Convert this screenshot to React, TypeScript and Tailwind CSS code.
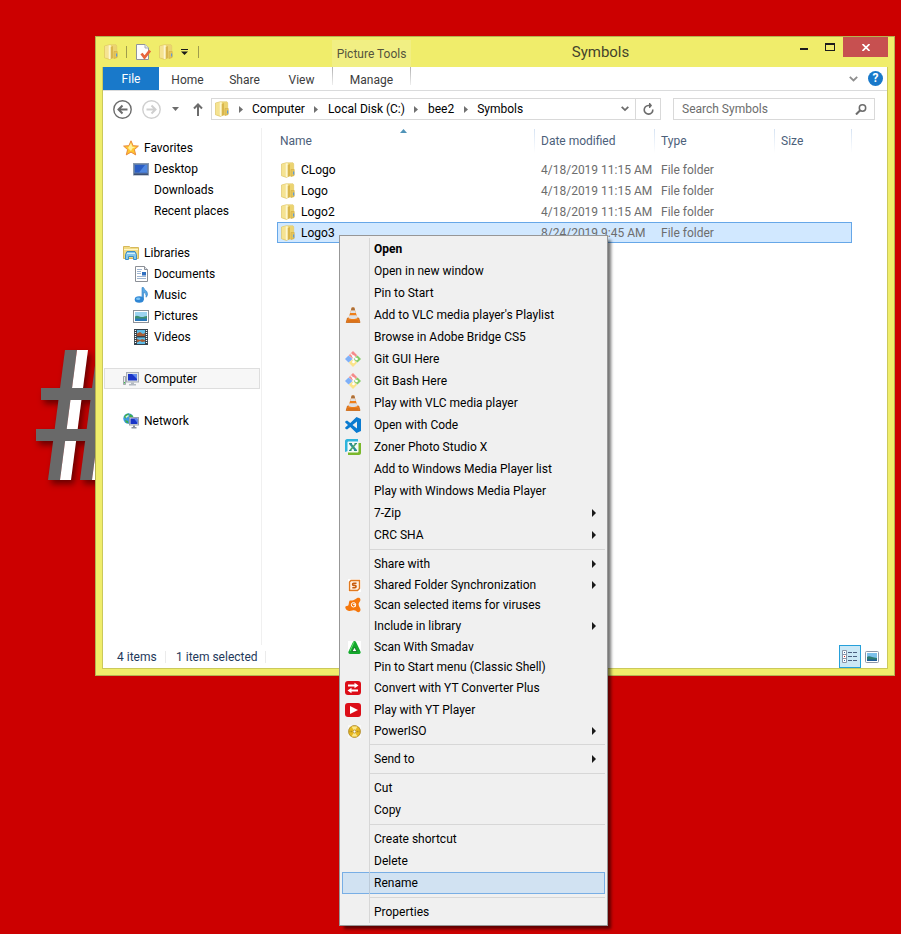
import type { ReactNode } from 'react';
import clsx from 'clsx';

function FolderIcon() {
  return (
    <svg width="14" height="16" viewBox="0 0 14 16" className="shrink-0">
      <path d="M.5 2 5 .8h7l.7 1V14H8l-2.500 1.500L.5 13.800z" fill="#efd978" stroke="#dcc263" strokeWidth=".6" />
      <path d="M1 2.300 4.500 1.300v12.900L1 13.400z" fill="#f5e391" />
      <path d="M4.600 1.200h2.200v13.500l-1.300.5-.9-.6z" fill="#fdf6cf" />
      <path d="M6.800 3 9 2v12l-2.200 1z" fill="#d9b64c" />
      <path d="M9 2.200h3.300V13.500H9z" fill="#ecd370" />
      <path d="M10 7.500h3.200v5.700L10 14.500z" fill="#e4c65c" stroke="#d3ad45" strokeWidth=".6" />
      <path d="M12 9.500h1.200v3H12z" fill="#5d9ad8" />
    </svg>
  );
}

function CheckedPageIcon() {
  return (
    <svg width="16" height="16" viewBox="0 0 16 16">
      <path d="M1.5.5h8.500l3.500 3.500v11.500h-12z" fill="#fdfdfd" stroke="#8f949c" />
      <path d="M10 .5v3.500h3.500" fill="#e6e9ee" stroke="#a8adb5" />
      <path d="m6.500 9.500 3 4L15 6.500" fill="none" stroke="#e8643c" strokeWidth="2.800" />
    </svg>
  );
}

function StarIcon() {
  return (
    <svg width="16" height="16" viewBox="0 0 16 16">
      <path d="m8 .8 2.1 4.900 5.300.4-4 3.500 1.300 5.300L8 12.100l-4.700 2.800 1.300-5.300-4-3.500 5.300-.4z" fill="#ffc72e" stroke="#ea8a3c" />
      <path d="m8 3 1.300 3.700 3.500.4-3.500 1.500L8 11 5 8z" fill="#fff0a0" />
    </svg>
  );
}

function DesktopIcon() {
  return (
    <svg width="16" height="16" viewBox="0 0 16 16">
      <rect x=".5" y="2.500" width="15" height="11.500" fill="#5f7fae" stroke="#8797ad" />
      <rect x="2" y="4" width="12" height="7.500" fill="#2b5dc4" />
      <path d="M6 11.500 12 4h2v7.500z" fill="#4e86e0" />
      <path d="M1 12.500h14V14H1z" fill="#3d4f73" />
    </svg>
  );
}

function LibrariesIcon() {
  return (
    <svg width="16" height="16" viewBox="0 0 16 16">
      <path d="M.5 1.500h6l1 1h8v11H.5z" fill="#f2dc84" stroke="#d6b85a" />
      <path d="M1 4.500h14" stroke="#fff6c8" />
      <path d="M2.500 14.500V9.500l1.500-3h8l1.500 3v5h-3v-3h-5v3z" fill="#83c6ea" stroke="#3e8cc2" />
      <path d="M4 8.500h8" stroke="#d4f0fc" />
    </svg>
  );
}

function DocumentsIcon() {
  return (
    <svg width="16" height="16" viewBox="0 0 16 16">
      <path d="M2.500.5h9l3 3v12h-12z" fill="#fff" stroke="#8b8f96" />
      <path d="M11.500.5v3h3" fill="#dfe6ee" stroke="#8b8f96" />
      <path d="M4 3.500h5M4 5.500h4M4 7.500h4M4 10.500h9M4 12.500h9" stroke="#9fb6d2" />
      <rect x="9" y="6" width="4" height="3.500" fill="#2f6fc0" />
    </svg>
  );
}

function MusicIcon() {
  return (
    <svg width="16" height="16" viewBox="0 0 16 16">
      <path d="M9 12.500V.5h1.500c.5 2.500 4 3 4 6.500 0 1.500-.7 2.800-1.500 3.300.5-3.300-1-4.300-2.500-4.800v7z" fill="#5aa8e4" stroke="#2f7dc4" strokeWidth=".6" />
      <ellipse cx="6.200" cy="12.500" rx="4.500" ry="3.300" fill="#2f86d4" />
      <ellipse cx="5.200" cy="11.700" rx="2.200" ry="1.300" fill="#7cc4f4" />
    </svg>
  );
}

function PicturesIcon() {
  return (
    <svg width="16" height="16" viewBox="0 0 16 16">
      <rect x=".5" y="2.500" width="15" height="12" fill="#fff" stroke="#8d9299" />
      <rect x="2" y="4" width="12" height="9" fill="#9cd4f0" />
      <path d="M2 8.500c2-2 4 0 6 .5s4-1 6-1V11H2z" fill="#3c8f70" />
      <path d="M2 10.500h12V13H2z" fill="#2a78b8" />
    </svg>
  );
}

function VideosIcon() {
  return (
    <svg width="16" height="16" viewBox="0 0 16 16">
      <rect x="1" width="14" height="16" fill="#35424c" />
      <rect x="4" y="1" width="8" height="6" fill="#5fbde8" />
      <rect x="4" y="8.500" width="8" height="6.500" fill="#5fbde8" />
      <path d="M4 4.500 7 3l3 2 2-1v3H4zM4 10l3 1 2-1 3 1v1.500L9 13l-2-1-3 1.500z" fill="#a85c34" />
      <path d="M2.500 1v14M13.500 1v14" stroke="#fff" strokeWidth="1.300" strokeDasharray="1 1" />
    </svg>
  );
}

function ComputerIcon() {
  return (
    <svg width="16" height="16" viewBox="0 0 16 16">
      <path d="M.5 5.500h2v8h-2z" fill="#e8eaec" stroke="#8f959c" strokeWidth=".8" />
      <path d="M1 11h1v1.500H1z" fill="#3fc14c" />
      <rect x="3.500" y="1.500" width="12" height="9.500" fill="#dfe3e8" stroke="#a7adb5" />
      <rect x="5" y="3" width="9" height="6.500" fill="#1a35c8" />
      <path d="M9 3h5v5z" fill="#5c86ec" />
      <path d="M8 11.500h3v1.500h2v1.500H6V13h2z" fill="#b4bac2" />
    </svg>
  );
}

function NetworkIcon() {
  return (
    <svg width="16" height="16" viewBox="0 0 16 16">
      <circle cx="5.500" cy="5.500" r="5.200" fill="#3d9ae0" />
      <path d="M1 4c1-2.500 3-3.500 5-3.500L5 3 2.500 5.500zM7 1l3 2-1 3-3-1zM2 7l3 1 .5 2.500L3 9.500z" fill="#3fae48" />
      <path d="M2.500 3.500 5 2l1 1-3 2z" fill="#d8f4dc" />
      <rect x="6.500" y="4.500" width="9" height="7.500" fill="#dfe3e8" stroke="#9aa1aa" />
      <rect x="7.500" y="5.500" width="7" height="5.500" fill="#1a35c8" />
      <path d="M11 5.500h3.500V10z" fill="#5c86ec" />
      <path d="M10 12.500h2V14h1.500v1.500h-5V14H10z" fill="#8a919c" />
    </svg>
  );
}

function VlcIcon() {
  return (
    <svg width="16" height="16" viewBox="0 0 16 16">
      <path d="M2.500 11h11.200l1.300 4.500H1.200z" fill="#f08020" stroke="#c86410" strokeWidth=".8" />
      <path d="M6.800.5h2.400L12.800 12c-2.300 1.500-7.300 1.500-9.600 0z" fill="#ee7f1a" />
      <path d="M6 3.200h4l.9 2.800H5.100zM4.400 8.300h7.200l.9 2.700c-2.400 1.400-6.600 1.400-9 0z" fill="#dfe1e4" />
      <path d="M6.800.5h2.400l.8 2.700H6z" fill="#a8703c" />
      <path d="M2.500 14h11" stroke="#c86410" />
    </svg>
  );
}

function GitIcon() {
  return (
    <svg width="16" height="16" viewBox="0 0 16 16">
      <path d="M8 0 12.200 4.200 8.800 7.200H7.200L3.800 4.200z" fill="#f58a8a" />
      <path d="m3.500 4.500 3.400 2.700v1.600L3.500 11.500 0 8z" fill="#7fb0f8" />
      <path d="M12.500 4.500 16 8l-3.500 3.500-3.400-2.700V7.200z" fill="#86cc66" />
      <path d="m3.800 11.800 3.400-3h1.600l3.400 3L8 16z" fill="#fbe38a" />
      <path d="m5.500 2.500 3 3v6M8.500 5.500l3.500 3" stroke="#f4f4f4" strokeWidth="1.300" fill="none" />
      <circle cx="8.500" cy="5.500" r="1.300" fill="#fff" />
      <circle cx="8.500" cy="11" r="1.300" fill="#fff" />
      <circle cx="11.500" cy="8" r="1.300" fill="#fff" />
    </svg>
  );
}

function CodeIcon() {
  return (
    <svg width="16" height="16" viewBox="0 0 16 16">
      <path d="M11.500 0 16 2v12l-4.500 2L5.300 10 2 12.500.2 11.500v-1L3 8 .2 5.500v-1L2 3.500 5.300 6zM12 4.500 7.500 8l4.500 3.500z" fill="#0b7bd0" fillRule="evenodd" />
    </svg>
  );
}

function ZonerIcon() {
  return (
    <svg width="16" height="16" viewBox="0 0 16 16">
      <path d="M0 2C0 1 1 0 2 0h11v3H3v9L0 13z" fill="#2fb4dc" />
      <path d="M13 4h3v10c0 1-1 2-2 2H3v-3h10z" fill="#7ab82c" />
      <rect x="2.500" y="2.500" width="11" height="11" rx="1" fill="#f6fafa" />
      <path d="m5 4.500 6 7" stroke="#2c8f98" strokeWidth="2.200" />
      <path d="m11 4.500-6 7" stroke="#48a468" strokeWidth="1.600" />
      <path d="M4 4.500h3M9.500 4.500h2.500M4 11.500h2.500M9 11.500h3" stroke="#2c8f80" />
    </svg>
  );
}

function SyncIcon() {
  return (
    <svg width="13" height="13" viewBox="0 0 13 13">
      <path d="M0 0h13v13H0z" fill="#fff" />
      <path d="M3 1.500h8.500v8l-2 2h-8V3z" fill="#fff3e4" stroke="#e07a20" strokeWidth="1.400" />
      <path d="M8.500 4.300H5.700c-1.500 0-1.500 2.100 0 2.100h1.200c1.500 0 1.500 2.300 0 2.300H4.300" fill="none" stroke="#c85c0c" strokeWidth="1.600" />
    </svg>
  );
}

function AvastIcon() {
  return (
    <svg width="16" height="16" viewBox="0 0 16 16">
      <path d="M5 3.500c2 .3 3.500 0 5.300-1.200C11.500 1 13 .3 14.200.8c1.500.7 1.600 2.700.5 4-.8 1-1.200 2-1 3.200.2 1.500 1.800 3 1.800 4.800 0 2.200-2.300 3-3.800 1.700-1.300-1.200-2.700-1.500-4.400-1-1.500.4-2.500.8-4 .3-1.800-.5-2.800-2-3-3.300s1-1.500 2.500-1.700C4.200 8.500 3.500 4 5 3.500z" fill="#f5770c" />
      <circle cx="8.500" cy="7.800" r="2.200" fill="none" stroke="#fff" strokeWidth="1" />
      <path d="M8 7.300h2.200v2.500" fill="none" stroke="#fff" />
    </svg>
  );
}

function SmadavIcon() {
  return (
    <svg width="13" height="13" viewBox="0 0 13 13">
      <path d="M0 0h13v13H0z" fill="#fff" />
      <path d="M6.500 0c1 0 1.500.8 2 2l4 8.500c.5 1.500 0 2.500-1.500 2.500H2C.5 13 0 12 .5 10.500l4-8.500c.5-1.200 1-2 2-2z" fill="#14a82c" />
      <path d="M6.500 6 9 10.500H4z" fill="#fff" stroke="#0a6c1a" strokeWidth=".8" />
      <path d="m6 1-4 9" stroke="#5fe070" fill="none" />
    </svg>
  );
}

function ConverterIcon() {
  return (
    <svg width="16" height="16" viewBox="0 0 16 16">
      <rect y="1" width="16" height="14" rx="3" fill="#dc0e18" />
      <path d="M3 5.500h7M13 10.500H6" stroke="#fff" strokeWidth="1.800" />
      <path d="M9.500 2.700 13.500 5.500l-4 2.800zM6.500 7.700v5.600l-4-2.800z" fill="#fff" />
    </svg>
  );
}

function PlayerIcon() {
  return (
    <svg width="16" height="16" viewBox="0 0 16 16">
      <rect y="1" width="16" height="14" rx="3" fill="#dc0e18" />
      <path d="M5 4v8l8-4z" fill="#fff" />
    </svg>
  );
}

function DiscIcon() {
  return (
    <svg width="13" height="13" viewBox="0 0 13 13">
      <path d="M0 0h13v13H0z" fill="#f8f8f8" />
      <circle cx="6.500" cy="6.500" r="6" fill="#e8b820" stroke="#a88428" strokeWidth=".8" />
      <path d="m6.500 6.500-3-5h6zM6.500 6.500l-3 5h6z" fill="#fae88c" />
      <circle cx="6.500" cy="6.500" r="1.500" fill="#fff" stroke="#a88428" strokeWidth=".8" />
      <path d="M1.500 6.500h2.500M9 6.500h2.500" stroke="#b08a20" strokeWidth="1.500" strokeDasharray="1 .5" />
    </svg>
  );
}

function Hash() {
  return (
    <svg
      width="140"
      height="150"
      viewBox="0 0 140 150"
      className="absolute left-[30px] top-[340px] drop-shadow-[3px_4px_3px_rgba(60,0,0,0.7)]"
    >
      <g transform="translate(0 10) skewX(-7.45)">
        <rect x="35" width="12" height="130" fill="#696969" />
        <rect x="47" width="11" height="130" fill="#fff" />
        <rect x="67" width="12" height="130" fill="#696969" />
        <rect x="79" width="11" height="130" fill="#fff" />
      </g>
      <rect x="11" y="48" width="100" height="12" fill="#696969" />
      <rect x="6" y="89" width="100" height="12" fill="#696969" />
    </svg>
  );
}

interface NavItem {
  label: string;
  icon?: ReactNode;
  child?: boolean;
  active?: boolean;
}

const navGroups: NavItem[][] = [
  [
    { label: 'Favorites', icon: <StarIcon /> },
    { label: 'Desktop', icon: <DesktopIcon />, child: true },
    { label: 'Downloads', child: true },
    { label: 'Recent places', child: true },
  ],
  [
    { label: 'Libraries', icon: <LibrariesIcon /> },
    { label: 'Documents', icon: <DocumentsIcon />, child: true },
    { label: 'Music', icon: <MusicIcon />, child: true },
    { label: 'Pictures', icon: <PicturesIcon />, child: true },
    { label: 'Videos', icon: <VideosIcon />, child: true },
  ],
  [{ label: 'Computer', icon: <ComputerIcon />, active: true }],
  [{ label: 'Network', icon: <NetworkIcon /> }],
];

const files = [
  { name: 'CLogo', date: '4/18/2019 11:15 AM', type: 'File folder' },
  { name: 'Logo', date: '4/18/2019 11:15 AM', type: 'File folder' },
  { name: 'Logo2', date: '4/18/2019 11:15 AM', type: 'File folder' },
  { name: 'Logo3', date: '8/24/2019 9:45 AM', type: 'File folder', selected: true },
];

interface MenuEntry {
  label: string;
  icon?: ReactNode;
  submenu?: boolean;
  bold?: boolean;
  compact?: boolean;
  active?: boolean;
}

const menuGroups: MenuEntry[][] = [
  [
    { label: 'Open', bold: true },
    { label: 'Open in new window' },
    { label: 'Pin to Start' },
    { label: "Add to VLC media player's Playlist", icon: <VlcIcon /> },
    { label: 'Browse in Adobe Bridge CS5' },
    { label: 'Git GUI Here', icon: <GitIcon /> },
    { label: 'Git Bash Here', icon: <GitIcon /> },
    { label: 'Play with VLC media player', icon: <VlcIcon /> },
    { label: 'Open with Code', icon: <CodeIcon /> },
    { label: 'Zoner Photo Studio X', icon: <ZonerIcon /> },
    { label: 'Add to Windows Media Player list' },
    { label: 'Play with Windows Media Player' },
    { label: '7-Zip', submenu: true },
    { label: 'CRC SHA', submenu: true },
  ],
  [
    { label: 'Share with', submenu: true },
    { label: 'Shared Folder Synchronization', icon: <SyncIcon />, submenu: true, compact: true },
    { label: 'Scan selected items for viruses', icon: <AvastIcon />, compact: true },
    { label: 'Include in library', submenu: true },
    { label: 'Scan With Smadav', icon: <SmadavIcon />, compact: true },
    { label: 'Pin to Start menu (Classic Shell)', compact: true },
    { label: 'Convert with YT Converter Plus', icon: <ConverterIcon /> },
    { label: 'Play with YT Player', icon: <PlayerIcon /> },
    { label: 'PowerISO', icon: <DiscIcon />, submenu: true, compact: true },
  ],
  [{ label: 'Send to', submenu: true }],
  [{ label: 'Cut' }, { label: 'Copy' }],
  [{ label: 'Create shortcut' }, { label: 'Delete' }, { label: 'Rename', active: true }],
  [{ label: 'Properties' }],
];

function TitleBar() {
  return (
    <header className="flex h-[30px] pr-1.5">
      <div className="flex w-[236px] items-center gap-2 pl-2">
        <FolderIcon />
        <span className="h-3 w-px bg-[#a09d4c]" />
        <button aria-label="Properties">
          <CheckedPageIcon />
        </button>
        <button aria-label="New folder">
          <FolderIcon />
        </button>
        <button aria-label="Customize Quick Access Toolbar" className="w-[9px]">
          <svg width="7" height="6" viewBox="0 0 7 6">
            <path d="M0 0h7v1H0zM0 2.500h7L3.500 6z" fill="#1a1a1a" />
          </svg>
        </button>
        <span className="h-3 w-px bg-[#a09d4c]" />
      </div>
      <div className="mt-[3px] flex w-[79px] items-center justify-center bg-[#f1ef83] text-[#55543c]">Picture Tools</div>
      <h1 className="flex-1 self-center text-center text-[15px] leading-5 text-[#44432c]">Symbols</h1>
      <div className="flex h-5">
        <button aria-label="Minimize" className="flex w-[27px] items-center justify-center">
          <svg width="8" height="10" viewBox="0 0 8 10">
            <path d="M0 6h8v2H0z" fill="#1c1c1c" />
          </svg>
        </button>
        <button aria-label="Maximize" className="flex w-[26px] items-center justify-center">
          <svg width="10" height="8" viewBox="0 0 10 8">
            <path d="M0 0h10v8H0zM1 2v5h8V2z" fill="#1c1c1c" fillRule="evenodd" />
          </svg>
        </button>
        <button aria-label="Close" className="flex w-[45px] items-center justify-center bg-[#c75050]">
          <svg width="8" height="7" viewBox="0 0 8 7">
            <path d="m.5 0 7 7M7.500 0l-7 7" stroke="#fff" strokeWidth="1.700" />
          </svg>
        </button>
      </div>
    </header>
  );
}

function RibbonTabs() {
  return (
    <div className="flex h-6 border-b border-[#dadbdc] text-[#3c3c3c]">
      <button className="w-14 bg-[#1979ca] text-white">File</button>
      <button className="w-[57px] pt-0.5">Home</button>
      <button className="w-[57px] pt-0.5">Share</button>
      <button className="w-[57px] pt-0.5">View</button>
      <div className="ml-0.5 flex w-[79px]">
        <span className="h-[18px] w-px bg-gradient-to-b from-[#b0b0b0] to-[#eeeeee]" />
        <button className="flex-1 pt-0.5">Manage</button>
        <span className="h-[18px] w-px bg-gradient-to-b from-[#b0b0b0] to-[#eeeeee]" />
      </div>
      <div className="ml-auto flex items-center gap-2.5 pr-1">
        <button aria-label="Expand the Ribbon">
          <svg width="9" height="6" viewBox="0 0 9 6">
            <path d="m.8.8 3.700 3.700L8.200.8" fill="none" stroke="#8e8e8e" strokeWidth="1.800" />
          </svg>
        </button>
        <button aria-label="Help" className="size-[15px] rounded-full bg-[#1979ca] text-xs leading-[15px] font-bold text-white">
          ?
        </button>
      </div>
    </div>
  );
}

function AddressBar() {
  return (
    <div className="flex h-9 items-center pr-3">
      <div className="flex w-[108px] shrink-0 items-center gap-2.5 pl-2.5">
        <button aria-label="Back">
          <svg width="19" height="19" viewBox="0 0 19 19" fill="none" stroke="#6c6c6c">
            <circle cx="9.500" cy="9.500" r="8.700" strokeWidth="1.400" />
            <path d="M14.500 9.500H6M9.500 5.500l-4 4 4 4" strokeWidth="2" />
          </svg>
        </button>
        <button aria-label="Forward">
          <svg width="19" height="19" viewBox="0 0 19 19" fill="none" stroke="#cfcfcf">
            <circle cx="9.500" cy="9.500" r="8.700" strokeWidth="1.400" />
            <path d="M4.500 9.500H13M9.500 5.500l4 4-4 4" strokeWidth="2" />
          </svg>
        </button>
        <button aria-label="Recent locations">
          <svg width="9" height="4" viewBox="0 0 9 4">
            <path d="M1 0h7L4.500 4z" fill="#6c6c6c" />
          </svg>
        </button>
        <button aria-label="Up">
          <svg width="16" height="13" viewBox="0 0 16 13" fill="none" stroke="#6c6c6c" strokeWidth="2">
            <path d="M8 13V2M4 5.500l4-4 4 4" />
          </svg>
        </button>
      </div>
      <div className="flex h-[22px] flex-1 items-center border border-[#d9d9d9] pl-[3px]">
        <FolderIcon />
        {['Computer', 'Local Disk (C:)', 'bee2', 'Symbols'].map((crumb) => (
          <a key={crumb} href="#" className="flex items-center whitespace-nowrap">
            <span className="flex w-[23px] justify-center">
              <svg width="4" height="7" viewBox="0 0 4 7">
                <path d="M0 0v7l4-3.500z" fill="#707070" />
              </svg>
            </span>
            {crumb}
          </a>
        ))}
        <button aria-label="Previous locations" className="mr-1.5 ml-auto">
          <svg width="8" height="6" viewBox="0 0 8 6">
            <path d="m.7.8 3.300 3.300L7.300.8" fill="none" stroke="#6c6c6c" strokeWidth="1.800" />
          </svg>
        </button>
        <button aria-label="Refresh" className="flex h-full w-[25px] items-center justify-center border-l border-[#d9d9d9]">
          <svg width="11" height="12" viewBox="0 0 11 12">
            <path d="M9.800 6.500A4.300 4.300 0 1 1 5.500 2.500h2" fill="none" stroke="#6c6c6c" strokeWidth="1.600" />
            <path d="M6 0h1l2 2.500L7 5H6z" fill="#6c6c6c" />
          </svg>
        </button>
      </div>
      <div className="ml-3 flex h-[22px] w-[202px] items-center border border-[#d9d9d9] pr-[7px] pl-2">
        <input
          type="search"
          aria-label="Search Symbols"
          placeholder="Search Symbols"
          className="min-w-0 flex-1 outline-none placeholder:text-[#6d6d6d]"
        />
        <svg width="12" height="11" viewBox="0 0 12 11" fill="none" stroke="#6c6c6c">
          <circle cx="7.500" cy="4" r="3.200" strokeWidth="1.500" />
          <path d="M5.200 6.300 1 10.500" strokeWidth="2" />
        </svg>
      </div>
    </div>
  );
}

function Sidebar() {
  return (
    <nav className="mt-px flex w-[159px] shrink-0 flex-col gap-[21px] border-r border-[#f0f0f0] px-px pt-[9px]">
      {navGroups.map((group) => (
        <ul key={group[0].label}>
          {group.map((item) => (
            <li key={item.label}>
              <a
                href="#"
                className={clsx(
                  'flex h-[21px] items-center gap-[5px] border',
                  item.child ? 'pl-7' : 'pl-[18px]',
                  item.active ? 'border-[#dedede] bg-[#f7f7f7]' : 'border-transparent'
                )}
              >
                <span className="size-4">{item.icon}</span>
                {item.label}
              </a>
            </li>
          ))}
        </ul>
      ))}
    </nav>
  );
}

function ColumnDivider() {
  return <span className="h-6 w-px bg-gradient-to-b from-[#d6e3f3] to-white" />;
}

function FileTable() {
  return (
    <main className="relative flex-1 pl-[15px]">
      <svg width="7" height="4" viewBox="0 0 7 4" className="absolute top-0.5 left-[138px]">
        <path d="M0 4h7L3.500 0z" fill="#4f93b8" />
      </svg>
      <table className="w-[575px] table-fixed">
        <colgroup>
          <col className="w-[257px]" />
          <col className="w-[120px]" />
          <col className="w-[120px]" />
          <col />
        </colgroup>
        <thead className="text-left text-[#4c607a]">
          <tr className="h-8 align-top">
            <th className="font-normal">
              <div className="flex h-7 items-center pl-[3px]">Name</div>
            </th>
            {['Date modified', 'Type', 'Size'].map((title) => (
              <th key={title} className="font-normal">
                <div className="flex h-7 items-center gap-1.5">
                  <ColumnDivider />
                  <span className="flex-1">{title}</span>
                  {title === 'Size' && <ColumnDivider />}
                </div>
              </th>
            ))}
          </tr>
        </thead>
        <tbody>
          {files.map((file) => (
            <tr
              key={file.name}
              className={clsx('h-[21px]', file.selected && 'bg-[#d1e8ff] outline-1 -outline-offset-1 outline-[#66a7e8]')}
            >
              <td>
                <div className="flex items-center gap-1.5 pl-1">
                  <FolderIcon />
                  {file.name}
                </div>
              </td>
              <td className="pl-[7px] whitespace-nowrap text-[#6d6d6d]">{file.date}</td>
              <td className="pl-[7px] text-[#6d6d6d]">{file.type}</td>
              <td />
            </tr>
          ))}
        </tbody>
      </table>
    </main>
  );
}

function StatusBar() {
  return (
    <footer className="flex h-[23px] items-center pr-1 pl-3.5 text-[#1e395b]">
      <span className="w-12">4 items</span>
      <span className="h-3 w-px bg-[#ebebeb]" />
      <span className="w-[99px] pl-2.5 whitespace-nowrap">1 item selected</span>
      <span className="h-3 w-px bg-[#ebebeb]" />
      <button aria-label="Details view" className="ml-auto flex h-full w-[22px] items-center justify-center border border-[#26a0da] bg-[#cbe8f6]">
        <svg width="16" height="13" viewBox="0 0 16 13">
          <path d="M.5.5h4v12h-4zM.5 4.500h4M.5 8.500h4" fill="#fff" stroke="#8a94a8" />
          <path d="M6 2.500h4M11 2.500h4M6 6.500h4M11 6.500h4M6 10.500h4M11 10.500h4" stroke="#4c5f80" />
          <path d="M2 2h1v1H2zM2 10h1v1H2z" fill="#3a6ea8" />
          <path d="M2 6h1v1H2z" fill="#d01818" />
        </svg>
      </button>
      <button aria-label="Large icons view" className="flex h-full w-[22px] items-center justify-center">
        <svg width="14" height="12" viewBox="0 0 14 12">
          <rect x=".5" y=".5" width="13" height="11" rx="1" fill="#fff" stroke="#8d96a8" />
          <rect x="2" y="2" width="10" height="8" fill="#7cc0ea" />
          <path d="M2 6c2-2 4 0 10 1v3H2z" fill="#2c7a70" />
          <path d="M2 8.500h10V10H2z" fill="#1f5c98" />
        </svg>
      </button>
    </footer>
  );
}

function MenuRow({ entry }: { entry: MenuEntry }) {
  return (
    <button
      role="menuitem"
      className={clsx(
        'flex w-full items-stretch text-left',
        entry.compact ? 'h-5' : 'h-[22px]',
        entry.active && 'bg-[#d1e2f2] inset-ring-1 inset-ring-[#78aee5]'
      )}
    >
      <span className="flex w-[19px] items-center justify-end">{entry.icon}</span>
      <span
        className={clsx(
          'ml-2 flex flex-1 items-center border-l pr-2 pl-1 whitespace-nowrap',
          entry.active ? 'border-[#bccbda]' : 'border-[#d7d7d7]',
          entry.bold && 'font-bold'
        )}
      >
        {entry.label}
        {entry.submenu && (
          <svg width="5" height="8" viewBox="0 0 5 8" className="ml-auto">
            <path d="M0 0v8l4-4z" fill="#1a1a1a" />
          </svg>
        )}
      </span>
    </button>
  );
}

function ContextMenu() {
  return (
    <div
      role="menu"
      className="absolute top-[235px] left-[339px] w-[269px] border border-[#979797] bg-[#f0f0f0] p-0.5 shadow-[4px_4px_3px_-1px_rgba(0,0,0,0.55)]"
    >
      {menuGroups.map((group, i) => (
        <div key={group[0].label}>
          {i > 0 && (
            <div className="ml-[27px] flex h-[7px] items-center border-l border-[#d7d7d7]">
              <span className="h-px flex-1 bg-[#d7d7d7]" />
            </div>
          )}
          {group.map((entry) => (
            <MenuRow key={entry.label} entry={entry} />
          ))}
        </div>
      ))}
    </div>
  );
}

export default function App() {
  return (
    <div className="relative min-h-screen overflow-hidden bg-[#cc0000] font-[Roboto,sans-serif] text-xs text-black">
      <Hash />
      <section className="absolute top-9 right-1.5 left-[95px] flex min-h-[640px] flex-col border border-[#b5b252] bg-[#f0ed6b]">
        <TitleBar />
        <div className="mx-1.5 mb-1.5 flex flex-1 flex-col border-x border-b border-[#cbc95b] bg-white">
          <RibbonTabs />
          <AddressBar />
          <div className="flex flex-1">
            <Sidebar />
            <FileTable />
          </div>
          <StatusBar />
        </div>
      </section>
      <ContextMenu />
    </div>
  );
}
